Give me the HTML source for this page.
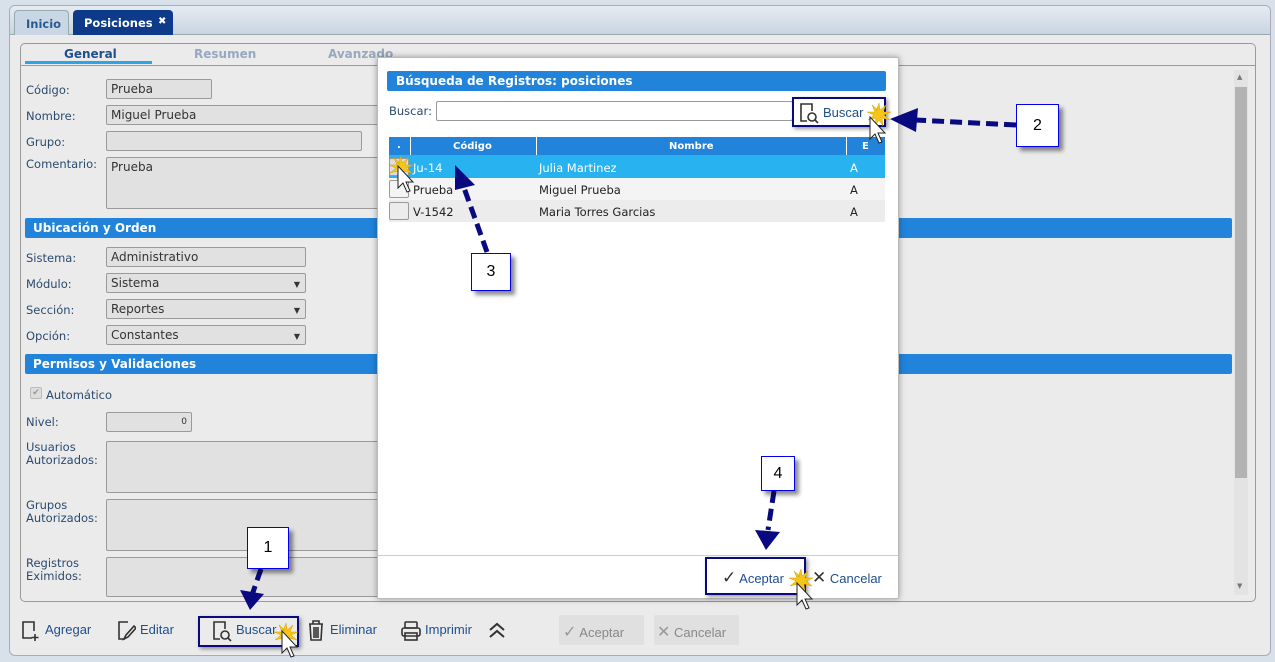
<!DOCTYPE html>
<html><head><meta charset="utf-8"><style>
*{box-sizing:border-box;margin:0;padding:0}
body{width:1275px;height:662px;overflow:hidden;background:#d8e0ea;font-family:"DejaVu Sans","Liberation Sans",sans-serif;font-size:12px;color:#2b4a6e;position:relative}
.a{position:absolute;white-space:nowrap}
.inp{position:absolute;background:#e1e1e1;border:1px solid #9a9a9a;border-radius:2px;color:#333;font-size:12px;padding:2px 4px;line-height:15px}
.lbl{position:absolute;left:26px;font-size:11.5px;color:#2b4a6e}
.sec{position:absolute;left:25px;width:1207px;height:20px;background:#2183d9;color:#fff;font-weight:bold;font-size:12px;padding:3px 8px;border-radius:2px}
.sel:after{content:"▼";position:absolute;right:5px;top:3px;font-size:8px;color:#333}
.box{position:absolute;background:#fff;border:1px solid #0000ee;box-shadow:4px 4px 4px rgba(0,0,0,.45);font-family:"Liberation Sans",sans-serif;font-size:16px;color:#000;text-align:center}
.tb{position:absolute;top:622px;font-size:13px;color:#1f4e8c;font-family:"Liberation Sans",sans-serif;white-space:nowrap}
.td{position:absolute;font-size:11.5px;color:#222}
</style></head><body>
<div class="a" style="left:9px;top:5px;width:1262px;height:651px;background:#ebebeb;border:1px solid #aab;border-radius:6px"></div>
<div class="a" style="left:10px;top:6px;width:1260px;height:29px;background:linear-gradient(#e6ebf1,#c9d5e3);border-bottom:1px solid #9aa;border-radius:5px 5px 0 0"></div>
<div class="a" style="left:14px;top:10px;width:55px;height:25px;background:#c9d6e5;border:1px solid #9aa;border-bottom:none;border-radius:4px 4px 0 0;font-weight:bold;color:#2b5a8e;padding:6px 11px;font-size:11.5px">Inicio</div>
<div class="a" style="left:73px;top:10px;width:100px;height:25px;background:#0e3a8a;border-radius:4px 4px 0 0;font-weight:bold;color:#fff;padding:6px 11px;font-size:11.5px">Posiciones<span style="position:absolute;left:85px;top:6px;font-size:10px">✖</span></div>
<div class="a" style="left:20px;top:43px;width:1236px;height:559px;border:1px solid #9a9a9a;border-radius:5px;background:#ebebeb"></div>
<div class="a" style="left:21px;top:65px;width:1234px;height:1px;background:#999"></div>
<div class="a" style="left:64px;top:47px;font-weight:bold;color:#1f4e8c">General</div>
<div class="a" style="left:25px;top:61px;width:127px;height:3px;background:#2aa6e8"></div>
<div class="a" style="left:194px;top:47px;font-weight:bold;color:#98a8be">Resumen</div>
<div class="a" style="left:328px;top:47px;font-weight:bold;color:#98a8be">Avanzado</div>
<div class="lbl" style="top:83px">Código:</div><div class="inp" style="left:106px;top:79px;width:106px;height:20px">Prueba</div>
<div class="lbl" style="top:109px">Nombre:</div><div class="inp" style="left:106px;top:105px;width:280px;height:20px">Miguel Prueba</div>
<div class="lbl" style="top:135px">Grupo:</div><div class="inp" style="left:106px;top:131px;width:256px;height:20px"></div>
<div class="lbl" style="top:157px">Comentario:</div><div class="inp" style="left:106px;top:157px;width:290px;height:52px">Prueba</div>
<div class="sec" style="top:218px">Ubicación y Orden</div>
<div class="lbl" style="top:251px">Sistema:</div><div class="inp" style="left:106px;top:247px;width:200px;height:20px">Administrativo</div>
<div class="lbl" style="top:277px">Módulo:</div><div class="inp sel" style="left:106px;top:273px;width:200px;height:20px">Sistema</div>
<div class="lbl" style="top:303px">Sección:</div><div class="inp sel" style="left:106px;top:299px;width:200px;height:20px">Reportes</div>
<div class="lbl" style="top:329px">Opción:</div><div class="inp sel" style="left:106px;top:325px;width:200px;height:20px">Constantes</div>
<div class="sec" style="top:354px">Permisos y Validaciones</div>
<div class="a" style="left:30px;top:387px;width:12px;height:12px;border:1px solid #bbb;background:#ddd;border-radius:2px;font-size:9px;color:#999;line-height:10px;text-align:center">✔</div>
<div class="lbl" style="left:46px;top:388px">Automático</div>
<div class="lbl" style="top:415px">Nivel:</div><div class="inp" style="left:106px;top:412px;width:86px;height:20px;text-align:right;font-size:9px">0</div>
<div class="lbl" style="top:441px;line-height:13px">Usuarios<br>Autorizados:</div><div class="inp" style="left:106px;top:441px;width:290px;height:52px"></div>
<div class="lbl" style="top:499px;line-height:13px">Grupos<br>Autorizados:</div><div class="inp" style="left:106px;top:499px;width:290px;height:52px"></div>
<div class="lbl" style="top:557px;line-height:13px">Registros<br>Eximidos:</div><div class="inp" style="left:106px;top:557px;width:290px;height:40px"></div>
<div class="a" style="left:1234px;top:70px;width:14px;height:525px;background:#e3e3e3"></div>
<div class="a" style="left:1235px;top:87px;width:12px;height:391px;background:#b3b3b3"></div>
<div class="a" style="left:1237px;top:73px;font-size:7px;color:#777">▲</div>
<div class="a" style="left:1237px;top:582px;font-size:7px;color:#777">▼</div>
<svg class="a" style="left:20px;top:619px" width="20" height="24" viewBox="0 0 20 24" fill="none" stroke="#333" stroke-width="1.6"><path d="M12 19H3V3h11v9"/><path d="M15 15v7M11.5 18.5h7"/></svg>
<div class="tb" style="left:45px">Agregar</div>
<svg class="a" style="left:116px;top:619px" width="20" height="24" viewBox="0 0 20 24" fill="none" stroke="#333" stroke-width="1.6"><path d="M12 3H3v17h6"/><path d="M8 20l2-4 8-9 2 2-8 9z"/></svg>
<div class="tb" style="left:140px">Editar</div>
<div class="a" style="left:198px;top:616px;width:101px;height:31px;border:2px solid #0a0a80;box-shadow:2px 2px 4px rgba(0,0,0,.4)"></div>
<svg class="a" style="left:211px;top:619px" width="22" height="24" viewBox="0 0 22 24" fill="none" stroke="#333" stroke-width="1.6"><path d="M9 20H3V3h11v7"/><circle cx="14" cy="16" r="4"/><path d="M17 19l3 3"/></svg>
<div class="tb" style="left:236px">Buscar</div>
<svg class="a" style="left:306px;top:619px" width="20" height="24" viewBox="0 0 20 24" fill="none" stroke="#333" stroke-width="1.6"><path d="M3 5h14M7 5V2h6v3M4 5l1 16h10l1-16M8 8v11M10 8v11M12 8v11"/></svg>
<div class="tb" style="left:330px">Eliminar</div>
<svg class="a" style="left:400px;top:619px" width="22" height="24" viewBox="0 0 22 24" fill="none" stroke="#333" stroke-width="1.6"><rect x="5" y="3" width="12" height="6" rx="1"/><rect x="2" y="9" width="18" height="8" rx="2"/><rect x="5" y="14" width="12" height="7"/></svg>
<div class="tb" style="left:425px">Imprimir</div>
<svg class="a" style="left:487px;top:621px" width="20" height="18" viewBox="0 0 20 18" fill="none" stroke="#333" stroke-width="2"><path d="M3 9l7-6 7 6M3 16l7-6 7 6"/></svg>
<div class="a" style="left:559px;top:615px;width:85px;height:30px;background:#e0e0e0;border-radius:2px"></div>
<div class="tb" style="left:563px;color:#888"><span style="color:#999;font-size:16px">✓</span> Aceptar</div>
<div class="a" style="left:654px;top:615px;width:85px;height:30px;background:#e0e0e0;border-radius:2px"></div>
<div class="tb" style="left:657px;color:#888"><span style="color:#999;font-size:16px">✕</span> Cancelar</div>
<div class="a" style="left:377px;top:57px;width:522px;height:542px;background:#fff;border:1px solid #bbb;box-shadow:0 0 6px rgba(0,0,0,.35)"></div>
<div class="a" style="left:387px;top:71px;width:499px;height:20px;background:#2183d9;color:#fff;font-weight:bold;padding:3px 9px;border-radius:2px;font-size:12px">Búsqueda de Registros: posiciones</div>
<div class="a" style="left:389px;top:104px;font-size:11.5px">Buscar:</div>
<div class="a" style="left:436px;top:101px;width:357px;height:20px;border:1px solid #999;border-radius:2px;background:#fff"></div>
<div class="a" style="left:792px;top:97px;width:94px;height:30px;border:2px solid #0a0a80;box-shadow:2px 2px 4px rgba(0,0,0,.4)"></div>
<svg class="a" style="left:798px;top:101px" width="22" height="24" viewBox="0 0 22 24" fill="none" stroke="#333" stroke-width="1.6"><path d="M9 20H3V3h11v7"/><circle cx="14" cy="16" r="4"/><path d="M17 19l3 3"/></svg>
<div class="a" style="left:823px;top:105px;font-size:13px;color:#1f4e8c;font-family:'Liberation Sans',sans-serif">Buscar</div>
<div class="a" style="left:389px;top:137px;width:496px;height:18px;background:#2183d9"></div>
<div class="a" style="left:410px;top:137px;width:1px;height:18px;background:#fff"></div>
<div class="a" style="left:536px;top:137px;width:1px;height:18px;background:#fff"></div>
<div class="a" style="left:846px;top:137px;width:1px;height:18px;background:#fff"></div>
<div class="a" style="left:397px;top:140px;color:#fff;font-weight:bold;font-size:10px">.</div>
<div class="a" style="left:453px;top:141px;color:#fff;font-weight:bold;font-size:10px">Código</div>
<div class="a" style="left:669px;top:141px;color:#fff;font-weight:bold;font-size:10px">Nombre</div>
<div class="a" style="left:862px;top:141px;color:#fff;font-weight:bold;font-size:10px">E</div>
<div class="a" style="left:389px;top:155px;width:496px;height:23px;background:#29b2f0"></div>
<div class="a" style="left:389px;top:178px;width:496px;height:22px;background:#f4f4f4"></div>
<div class="a" style="left:389px;top:200px;width:496px;height:22px;background:#ececec"></div>
<div class="a" style="left:389px;top:158px;width:20px;height:18px;border:1px solid #999;border-radius:2px;background:#ddd"></div>
<div class="a" style="left:389px;top:180px;width:20px;height:18px;border:1px solid #999;border-radius:2px;background:#f4f4f4"></div>
<div class="a" style="left:389px;top:202px;width:20px;height:18px;border:1px solid #999;border-radius:2px;background:#ececec"></div>
<div class="td" style="left:413px;top:161px;color:#fff">Ju-14</div><div class="td" style="left:539px;top:161px;color:#fff">Julia Martinez</div><div class="td" style="left:850px;top:161px;color:#fff">A</div>
<div class="td" style="left:413px;top:183px">Prueba</div><div class="td" style="left:539px;top:183px">Miguel Prueba</div><div class="td" style="left:850px;top:183px">A</div>
<div class="td" style="left:413px;top:205px">V-1542</div><div class="td" style="left:539px;top:205px">Maria Torres Garcias</div><div class="td" style="left:850px;top:205px">A</div>
<div class="a" style="left:378px;top:555px;width:520px;height:1px;background:#ccc"></div>
<div class="a" style="left:705px;top:557px;width:101px;height:38px;border:2px solid #0a0a80;box-shadow:2px 2px 4px rgba(0,0,0,.4)"></div>
<div class="a" style="left:722px;top:568px;font-size:13px;color:#1f4e8c;font-family:'Liberation Sans',sans-serif"><span style="color:#333;font-size:17px">✓</span> Aceptar</div>
<div class="a" style="left:812px;top:568px;font-size:13px;color:#1f4e8c;font-family:'Liberation Sans',sans-serif"><span style="color:#333;font-size:17px">✕</span> Cancelar</div>
<svg class="a" style="left:0;top:0" width="1275" height="662">
<g stroke="#0a0a80" stroke-width="5" stroke-dasharray="12,6" fill="none">
<path d="M1016 125L915 120"/><path d="M487 252L463 185"/><path d="M261 569L252 595"/><path d="M774 491L768 530"/>
</g>
<g fill="#0a0a80">
<polygon points="890,119 918,108 916,132"/><polygon points="455,165 475,185 455,190"/><polygon points="250,610 240,590 264,594"/><polygon points="766,550 755,530 780,532"/>
</g>
<g fill="#f5c518" stroke="#d9a000" stroke-width=".5">
<path d="M283 631l3-8 1 7 6-5-3 7 8 0-7 3 6 5-8-2 1 8-4-6-4 6 1-8-8 2 6-5-7-3 8 0-3-7 6 5z"/>
<path d="M876 111l3-8 1 7 6-5-3 7 8 0-7 3 6 5-8-2 1 8-4-6-4 6 1-8-8 2 6-5-7-3 8 0-3-7 6 5z"/>
<path d="M398 164l3-8 1 7 6-5-3 7 8 0-7 3 6 5-8-2 1 8-4-6-4 6 1-8-8 2 6-5-7-3 8 0-3-7 6 5z"/>
<path d="M798 577l3-8 1 7 6-5-3 7 8 0-7 3 6 5-8-2 1 8-4-6-4 6 1-8-8 2 6-5-7-3 8 0-3-7 6 5z"/>
</g>
<g fill="#fff" stroke="#222" stroke-width="1">
<path d="M282 631v22l5-5 4 9 3-1-4-9h7z"/><path d="M870 117v22l5-5 4 9 3-1-4-9h7z"/><path d="M398 166v22l5-5 4 9 3-1-4-9h7z"/><path d="M797 583v22l5-5 4 9 3-1-4-9h7z"/>
</g>
</svg>
<div class="box" style="left:247px;top:527px;width:42px;height:42px;line-height:40px">1</div>
<div class="box" style="left:1016px;top:104px;width:43px;height:43px;line-height:41px">2</div>
<div class="box" style="left:471px;top:253px;width:40px;height:38px;line-height:36px">3</div>
<div class="box" style="left:761px;top:456px;width:34px;height:35px;line-height:33px">4</div>
</body></html>
